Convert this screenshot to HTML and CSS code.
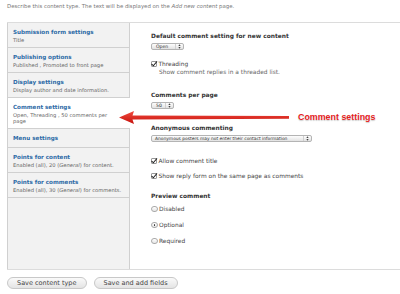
FILE: index.html
```html
<!DOCTYPE html>
<html lang="en">
<head>
  <meta charset="UTF-8">
  <title>Comment settings</title>
  <link rel="stylesheet" href="styles.css">
</head>
<body>
  <p class="intro">Describe this content type. The text will be displayed on the <em>Add new content</em> page.</p>

  <div class="vtabs">
    <ul class="tab-list">
      <li class="tab"><a>Submission form settings</a><span class="summary">Title</span></li>
      <li class="tab"><a>Publishing options</a><span class="summary">Published , Promoted to front page</span></li>
      <li class="tab"><a>Display settings</a><span class="summary">Display author and date information.</span></li>
      <li class="tab active"><a>Comment settings</a><span class="summary">Open, Threading , 50 comments per page</span></li>
      <li class="tab"><a>Menu settings</a></li>
      <li class="tab"><a>Points for content</a><span class="summary">Enabled (all), 20 (<em>General</em>) for content.</span></li>
      <li class="tab"><a>Points for comments</a><span class="summary">Enabled (all), 30 (<em>General</em>) for comments.</span></li>
    </ul>

    <div class="pane">
      <div class="field">
        <label class="field-label">Default comment setting for new content</label>
        <span class="select select-open">Open <svg class="updown" viewBox="0 0 4 7"><path d="M2 0.5L3.6 2.8H0.4Z M2 6.5L3.6 4.2H0.4Z" fill="#444"/></svg></span>
      </div>

      <div class="field field-check">
        <label class="option"><span class="checkbox checked"></span>Threading</label>
        <div class="desc">Show comment replies in a threaded list.</div>
      </div>

      <div class="field field-pages">
        <label class="field-label">Comments per page</label>
        <span class="select select-pages">50 <svg class="updown" viewBox="0 0 4 7"><path d="M2 0.5L3.6 2.8H0.4Z M2 6.5L3.6 4.2H0.4Z" fill="#444"/></svg></span>
      </div>

      <div class="field field-anon">
        <label class="field-label">Anonymous commenting</label>
        <span class="select select-anon">Anonymous posters may not enter their contact information <svg class="updown" viewBox="0 0 4 7"><path d="M2 0.5L3.6 2.8H0.4Z M2 6.5L3.6 4.2H0.4Z" fill="#444"/></svg></span>
      </div>

      <div class="field field-title">
        <label class="option"><span class="checkbox checked"></span>Allow comment title</label>
      </div>
      <div class="field field-reply">
        <label class="option"><span class="checkbox checked"></span>Show reply form on the same page as comments</label>
      </div>

      <div class="field field-preview">
        <label class="field-label">Preview comment</label>
        <label class="option radio-row"><span class="radio"></span>Disabled</label>
        <label class="option radio-row"><span class="radio selected"></span>Optional</label>
        <label class="option radio-row"><span class="radio"></span>Required</label>
      </div>
    </div>
  </div>

  <div class="actions">
    <button class="btn">Save content type</button>
    <button class="btn">Save and add fields</button>
  </div>

  <div class="callout">
    <svg class="callout-arrow" width="176" height="16" viewBox="0 0 176 16">
      <defs>
        <linearGradient id="shaft" x1="0" y1="0" x2="0" y2="1">
          <stop offset="0" stop-color="#f24b3f"/>
          <stop offset="1" stop-color="#c5110b"/>
        </linearGradient>
      </defs>
      <path d="M0 8.5 L15 2 L13.5 6.6 L170 7 L170 9.8 L13.5 10.4 L15 15 Z" fill="url(#shaft)"/>
    </svg>
    <span class="callout-text">Comment settings</span>
  </div>
</body>
</html>
```

FILE: styles.css
```css
body {
  margin: 0;
  padding: 0 0 0 7px;
  font-family: "DejaVu Sans", sans-serif;
  font-size: 5.9px;
  color: #333;
  background: #fff;
  position: relative;
}

.intro {
  margin: 0;
  height: 22px;
  font-size: 5.4px;
  line-height: 12px;
  color: #777;
}

/* vertical tabs */
.vtabs {
  display: flex;
  height: 248px;
  box-sizing: border-box;
  border-top: 1px solid #dcdcdc;
  border-bottom: 1px solid #dcdcdc;
}

.tab-list {
  width: 123px;
  flex: none;
  box-sizing: border-box;
  margin: 0;
  padding: 0;
  list-style: none;
  background: #f2f2f2;
  border-left: 1px solid #d0d0d0;
  border-right: 1px solid #d0d0d0;
}

.tab {
  padding: 5px 0 4px 5px;
  border-bottom: 1px solid #d0d0d0;
  white-space: nowrap;
}

.tab a {
  display: block;
  font-size: 5.6px;
  font-weight: bold;
  line-height: 9px;
  color: #2c6aa6;
}

.summary {
  display: block;
  font-size: 5.2px;
  line-height: 6px;
  color: #666;
}

.tab.active {
  background: #fff;
  margin-right: -1px;
  padding-right: 10px;
  white-space: normal;
}

.pane {
  flex: 1;
  padding: 9px 0 0 21px;
}

.field-label {
  display: block;
  font-weight: bold;
  line-height: 8px;
  color: #333;
}

.select {
  display: flex;
  align-items: center;
  justify-content: space-between;
  box-sizing: border-box;
  height: 7px;
  margin-top: 3px;
  padding: 0 2px 0 4px;
  font-size: 4.6px;
  color: #333;
  border: 1px solid #b4b4b4;
  border-radius: 2px;
  background: linear-gradient(#fdfdfd, #e2e2e2);
}

.updown {
  width: 3px;
  height: 5px;
  padding-left: 2px;
  border-left: 1px solid #d0d0d0;
}

.select-open { width: 33px; }
.select-pages { width: 23px; }
.select-anon { width: 161px; padding-left: 3px; font-size: 4.4px; }

.option {
  display: flex;
  align-items: center;
  line-height: 8px;
  color: #444;
}

.checkbox {
  width: 4px;
  height: 4px;
  margin-right: 1.5px;
  border: 1px solid #999;
  border-radius: 1px;
  background: #fff;
  position: relative;
}

.checkbox.checked::after {
  content: "";
  position: absolute;
  left: 1.2px;
  top: -2px;
  width: 1.6px;
  height: 4.5px;
  border-right: 1.3px solid #222;
  border-bottom: 1.3px solid #222;
  transform: rotate(40deg);
}

.radio {
  width: 4.5px;
  height: 4.5px;
  margin-right: 1.5px;
  border: 1px solid #aaa;
  border-radius: 50%;
  background: linear-gradient(#fff, #e6e6e6);
  position: relative;
}

.radio.selected::after {
  content: "";
  position: absolute;
  left: 1.5px;
  top: 1.5px;
  width: 1.6px;
  height: 1.6px;
  border-radius: 50%;
  background: #333;
}

.desc {
  margin: 1px 0 0 8px;
  line-height: 7px;
  color: #666;
}

.field-check { margin-top: 10px; }
.field-pages { margin-top: 15px; }
.field-anon { margin-top: 15px; }
.field-title { margin-top: 15px; }
.field-reply { margin-top: 7px; }
.field-preview { margin-top: 12px; }

.radio-row { margin-top: 5px; }
.radio-row + .radio-row { margin-top: 8px; }

/* buttons */
.actions {
  display: flex;
  gap: 7px;
  padding-top: 7px;
}

.btn {
  height: 12px;
  padding: 0 9px;
  font-family: "DejaVu Sans", sans-serif;
  font-size: 6.5px;
  color: #444;
  border: 1px solid #c8c8c8;
  border-radius: 6px;
  background: linear-gradient(#fafafa, #e4e4e4);
}

/* annotation */
.callout {
  position: absolute;
  left: 119px;
  top: 109px;
  display: flex;
  align-items: center;
}

.callout-arrow {
  display: block;
}

.callout-text {
  margin-left: 3px;
  font-family: "Liberation Sans", sans-serif;
  font-size: 8.9px;
  font-weight: bold;
  color: #e3201b;
  text-shadow: 0 0 1px #fff, 0 0 1px #fff, 0 1px 1px rgba(0, 0, 0, 0.25);
}
```
